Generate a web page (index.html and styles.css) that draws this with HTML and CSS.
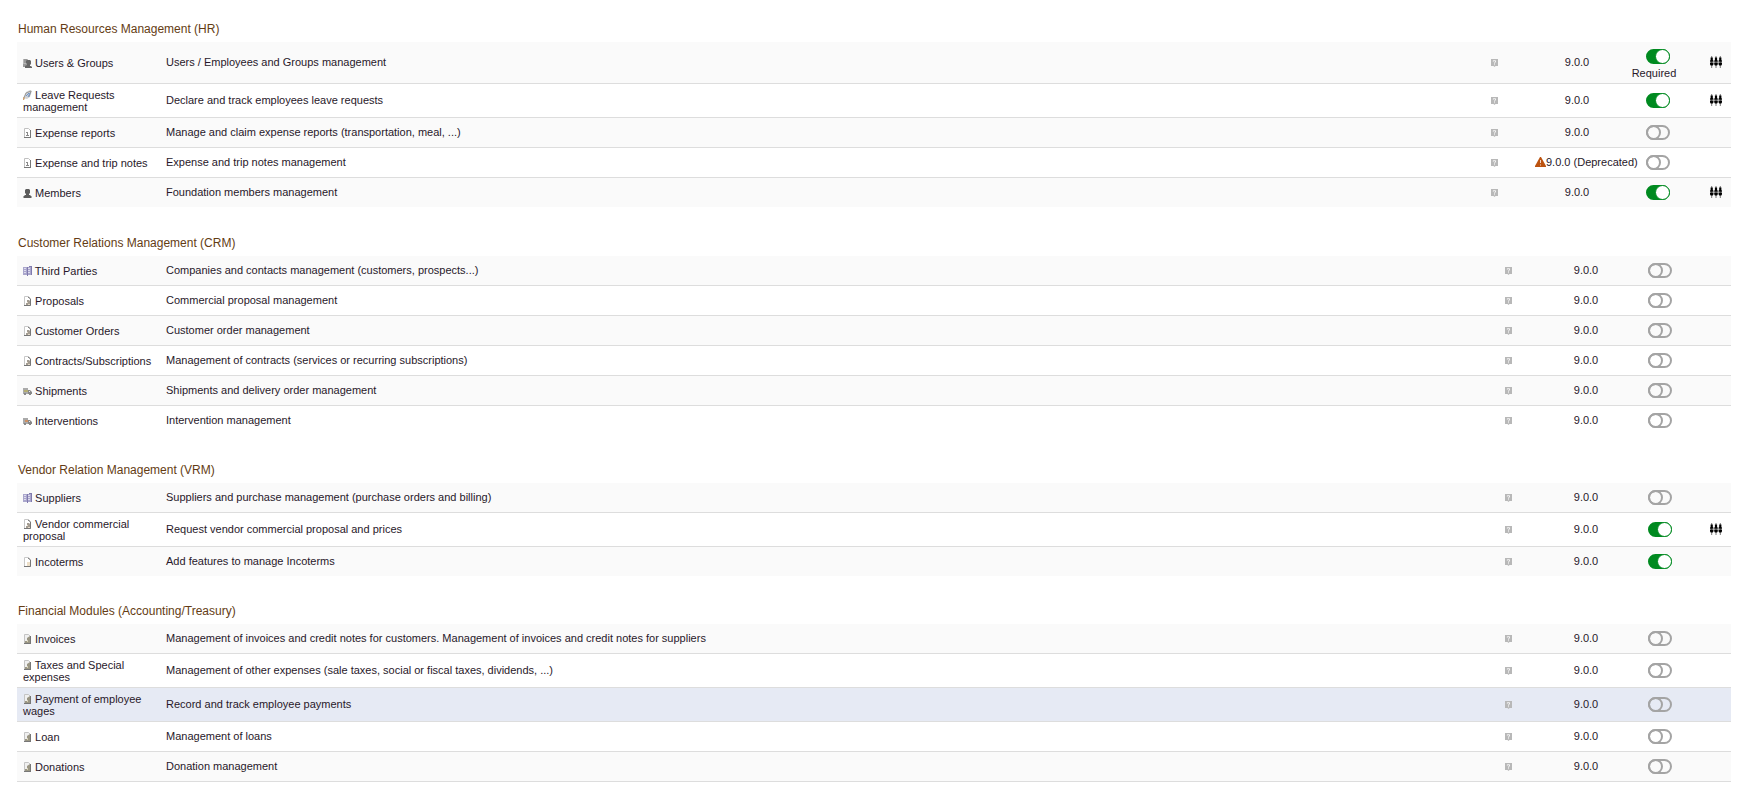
FILE: index.html
```html
<!DOCTYPE html>
<html lang="en">
<head>
  <meta charset="UTF-8">
  <meta name="viewport" content="width=device-width, initial-scale=1.0">
  <title>Modules</title>
  <link rel="stylesheet" href="styles.css">
</head>
<body>
  <!-- Icons shared by the rows -->
  <svg class="sprite" aria-hidden="true">
    <symbol id="icon-users" viewBox="0 0 9 10">
      <path fill="#b8b8b8" d="M0 1h5v7H0z"/>
      <path fill="#999" d="M1 1h3v4H1zM0 6h4v3H0z"/>
      <path fill="#666" d="M4 2h3l1 1v3L7 7v1h1l1 1v1H2V8l2-1V6L3 5V3z"/>
    </symbol>
    <symbol id="icon-user" viewBox="0 0 9 10">
      <path fill="#aaa" d="M0 8h9v2H0z"/>
      <path fill="#5c5c5c" d="M3 1h3l1 1v3L6 6v1h1l1 1v2H1V8l1-1h1V6L2 5V2z"/>
    </symbol>
    <symbol id="icon-leave" viewBox="0 0 9 10">
      <path fill="#d4d4d4" d="M3 2l4-2 2 1-2 6-3 2-4-1z"/>
      <path fill="none" stroke="#999" d="M1 8l2-5 5-2-2 6"/>
      <path fill="none" stroke="#6d94cc" d="M3 6l3-3M5 7l2-4"/>
      <path fill="#cda273" d="M0 7l2 1-1 2H0z"/>
    </symbol>
    <symbol id="icon-report" viewBox="0 0 9 10">
      <path fill="#fff" stroke="#c0c0c0" d="M1.500.5h4l2 2v7h-6z"/>
      <path stroke="#777" d="M7.500 2v8M1 9.500h7"/>
      <path stroke="#888" d="M3 4.500h2M3 7.500h3M4.500 4v4"/>
    </symbol>
    <symbol id="icon-doc" viewBox="0 0 9 10">
      <path fill="#fff" stroke="#c8c8c8" d="M1.500.5h4l2 2v7h-6z"/>
      <path fill="none" stroke="#777" d="M5 1l2.500 2v6.500H1"/>
      <path fill="#eddfc8" d="M4 5h3v4H4z"/>
    </symbol>
    <symbol id="icon-order" viewBox="0 0 9 10">
      <path fill="#fff" stroke="#c8c8c8" d="M1.500.5h4l2 2v7h-6z"/>
      <path fill="none" stroke="#777" d="M5 1l2.500 2v6.500H1"/>
      <path fill="#a39c92" d="M4 4h2l1 1v4H3V7h1z"/>
      <path fill="#e6dac8" d="M4 6h1v1H4zM5 8h2v1H5z"/>
    </symbol>
    <symbol id="icon-bill" viewBox="0 0 9 10">
      <path fill="#f0f0f0" stroke="#c4c4c4" d="M1.500.5h4l2 2v7h-6z"/>
      <path stroke="#777" d="M7.500 2v8M1 9.500h7"/>
      <path fill="#9a9684" d="M4 4l3-2v7H2V7h2z"/>
      <path fill="#d6d0b6" d="M4 6h1v2H4z"/>
    </symbol>
    <symbol id="icon-company" viewBox="0 0 9 10">
      <path fill="#aaa6cc" d="M0 1h4v8H0zM4 1h5v8H4z"/>
      <path fill="#807aad" d="M4 1h1v9H4zM6 0h3v1H6zM8 1h1v8H8z"/>
      <path stroke="#dddbed" d="M1 2.500h2M1 4.500h2M1 6.500h2M5 2.500h2M5 4.500h2M5 6.500h2"/>
    </symbol>
    <symbol id="icon-truck" viewBox="0 0 9 10">
      <path fill="#aaa" d="M0 2h5v6H0z"/>
      <path fill="#b3ad72" d="M1 4h4v2H1z"/>
      <path fill="#888" d="M5 4h2l2 2v2H5zM1 7h2v2H1zM6 7h2v2H6z"/>
      <path fill="#eee" d="M6 5h1v1H6z"/>
    </symbol>
    <symbol id="icon-service" viewBox="0 0 9 10">
      <path fill="#aaa" d="M0 2h5v6H0z"/>
      <path fill="#cc9064" d="M2 4h3v2H2z"/>
      <path fill="#888" d="M5 4h2l2 2v2H5zM1 7h2v2H1zM6 7h2v2H6z"/>
      <path fill="#eee" d="M6 5h1v1H6z"/>
    </symbol>
    <symbol id="icon-help" viewBox="0 0 7 8">
      <path fill="#b8b8b8" d="M0 0h7v7H4.500l-1 1-1-1H0z"/>
      <path fill="none" stroke="#fff" stroke-width=".8" d="M2.300 2.600v-.9h2.200v1.500l-1 .5v1M3.500 5.300v.9"/>
    </symbol>
    <symbol id="icon-setup" viewBox="0 0 12 12">
      <path stroke="#777" d="M1.700 0v12M6 0v12M10.300 0v12"/>
      <path fill="#000" d="M.6 1.500h2.200V4l.7.700v1H0v-1L.6 4zM4.900 1.500h2.200V4l.7.700v1H4.200v-1l.7-.7zM9.200 1.500h2.200V4l.6.700v1H8.500v-1l.7-.7z"/>
      <path fill="#000" d="M0 6.600h3.500v1.600l-.7 1.300H.6L0 8.200zM4.200 6.600h3.600v1.600l-.7 1.300H4.900l-.7-1.300zM8.500 6.600H12v1.600l-.6 1.300H9.200l-.7-1.300z"/>
    </symbol>
    <symbol id="icon-warning" viewBox="0 0 11 10">
      <path fill="#bc5310" d="M5 0h1l5 9v1H0V9z"/>
      <path stroke="#f0d8c8" d="M5.500 3v3M5.500 7.500v1"/>
    </symbol>
  </svg>

  <main class="modules">
    <section class="family">
      <h2>Human Resources Management (HR)</h2>
      <table class="module-table with-notes">
        <colgroup><col class="col-name"><col><col class="col-help"><col class="col-version"><col class="col-status"><col class="col-setup"></colgroup>
        <tbody>
          <tr>
            <td class="name"><label for="mod-users"><svg class="icon"><use href="#icon-users"/></svg> Users &amp; Groups</label></td>
            <td>Users / Employees and Groups management</td>
            <td class="help"><a href="#"><svg><use href="#icon-help"/></svg></a></td>
            <td class="version">9.0.0</td>
            <td class="status"><input type="checkbox" class="toggle" id="mod-users" checked>Required</td>
            <td class="setup"><a href="#"><svg><use href="#icon-setup"/></svg></a></td>
          </tr>
          <tr>
            <td class="name"><label for="mod-leave"><svg class="icon"><use href="#icon-leave"/></svg> Leave Requests management</label></td>
            <td>Declare and track employees leave requests</td>
            <td class="help"><a href="#"><svg><use href="#icon-help"/></svg></a></td>
            <td class="version">9.0.0</td>
            <td class="status"><input type="checkbox" class="toggle" id="mod-leave" checked></td>
            <td class="setup"><a href="#"><svg><use href="#icon-setup"/></svg></a></td>
          </tr>
          <tr>
            <td class="name"><label for="mod-expense"><svg class="icon"><use href="#icon-report"/></svg> Expense reports</label></td>
            <td>Manage and claim expense reports (transportation, meal, ...)</td>
            <td class="help"><a href="#"><svg><use href="#icon-help"/></svg></a></td>
            <td class="version">9.0.0</td>
            <td class="status"><input type="checkbox" class="toggle" id="mod-expense"></td>
            <td class="setup"></td>
          </tr>
          <tr>
            <td class="name"><label for="mod-trip"><svg class="icon"><use href="#icon-report"/></svg> Expense and trip notes</label></td>
            <td>Expense and trip notes management</td>
            <td class="help"><a href="#"><svg><use href="#icon-help"/></svg></a></td>
            <td class="version"><svg class="warning"><use href="#icon-warning"/></svg>9.0.0 (Deprecated)</td>
            <td class="status"><input type="checkbox" class="toggle" id="mod-trip"></td>
            <td class="setup"></td>
          </tr>
          <tr>
            <td class="name"><label for="mod-members"><svg class="icon"><use href="#icon-user"/></svg> Members</label></td>
            <td>Foundation members management</td>
            <td class="help"><a href="#"><svg><use href="#icon-help"/></svg></a></td>
            <td class="version">9.0.0</td>
            <td class="status"><input type="checkbox" class="toggle" id="mod-members" checked></td>
            <td class="setup"><a href="#"><svg><use href="#icon-setup"/></svg></a></td>
          </tr>
        </tbody>
      </table>
    </section>

    <section class="family">
      <h2>Customer Relations Management (CRM)</h2>
      <table class="module-table">
        <colgroup><col class="col-name"><col><col class="col-help"><col class="col-version"><col class="col-status"><col class="col-setup"></colgroup>
        <tbody>
          <tr>
            <td class="name"><label for="mod-third"><svg class="icon"><use href="#icon-company"/></svg> Third Parties</label></td>
            <td>Companies and contacts management (customers, prospects...)</td>
            <td class="help"><a href="#"><svg><use href="#icon-help"/></svg></a></td>
            <td class="version">9.0.0</td>
            <td class="status"><input type="checkbox" class="toggle" id="mod-third"></td>
            <td class="setup"></td>
          </tr>
          <tr>
            <td class="name"><label for="mod-proposals"><svg class="icon"><use href="#icon-order"/></svg> Proposals</label></td>
            <td>Commercial proposal management</td>
            <td class="help"><a href="#"><svg><use href="#icon-help"/></svg></a></td>
            <td class="version">9.0.0</td>
            <td class="status"><input type="checkbox" class="toggle" id="mod-proposals"></td>
            <td class="setup"></td>
          </tr>
          <tr>
            <td class="name"><label for="mod-orders"><svg class="icon"><use href="#icon-order"/></svg> Customer Orders</label></td>
            <td>Customer order management</td>
            <td class="help"><a href="#"><svg><use href="#icon-help"/></svg></a></td>
            <td class="version">9.0.0</td>
            <td class="status"><input type="checkbox" class="toggle" id="mod-orders"></td>
            <td class="setup"></td>
          </tr>
          <tr>
            <td class="name"><label for="mod-contracts"><svg class="icon"><use href="#icon-order"/></svg> Contracts/Subscriptions</label></td>
            <td>Management of contracts (services or recurring subscriptions)</td>
            <td class="help"><a href="#"><svg><use href="#icon-help"/></svg></a></td>
            <td class="version">9.0.0</td>
            <td class="status"><input type="checkbox" class="toggle" id="mod-contracts"></td>
            <td class="setup"></td>
          </tr>
          <tr>
            <td class="name"><label for="mod-shipments"><svg class="icon"><use href="#icon-truck"/></svg> Shipments</label></td>
            <td>Shipments and delivery order management</td>
            <td class="help"><a href="#"><svg><use href="#icon-help"/></svg></a></td>
            <td class="version">9.0.0</td>
            <td class="status"><input type="checkbox" class="toggle" id="mod-shipments"></td>
            <td class="setup"></td>
          </tr>
          <tr>
            <td class="name"><label for="mod-interventions"><svg class="icon"><use href="#icon-service"/></svg> Interventions</label></td>
            <td>Intervention management</td>
            <td class="help"><a href="#"><svg><use href="#icon-help"/></svg></a></td>
            <td class="version">9.0.0</td>
            <td class="status"><input type="checkbox" class="toggle" id="mod-interventions"></td>
            <td class="setup"></td>
          </tr>
        </tbody>
      </table>
    </section>

    <section class="family">
      <h2>Vendor Relation Management (VRM)</h2>
      <table class="module-table">
        <colgroup><col class="col-name"><col><col class="col-help"><col class="col-version"><col class="col-status"><col class="col-setup"></colgroup>
        <tbody>
          <tr>
            <td class="name"><label for="mod-suppliers"><svg class="icon"><use href="#icon-company"/></svg> Suppliers</label></td>
            <td>Suppliers and purchase management (purchase orders and billing)</td>
            <td class="help"><a href="#"><svg><use href="#icon-help"/></svg></a></td>
            <td class="version">9.0.0</td>
            <td class="status"><input type="checkbox" class="toggle" id="mod-suppliers"></td>
            <td class="setup"></td>
          </tr>
          <tr>
            <td class="name"><label for="mod-vendor"><svg class="icon"><use href="#icon-order"/></svg> Vendor commercial proposal</label></td>
            <td>Request vendor commercial proposal and prices</td>
            <td class="help"><a href="#"><svg><use href="#icon-help"/></svg></a></td>
            <td class="version">9.0.0</td>
            <td class="status"><input type="checkbox" class="toggle" id="mod-vendor" checked></td>
            <td class="setup"><a href="#"><svg><use href="#icon-setup"/></svg></a></td>
          </tr>
          <tr>
            <td class="name"><label for="mod-incoterms"><svg class="icon"><use href="#icon-doc"/></svg> Incoterms</label></td>
            <td>Add features to manage Incoterms</td>
            <td class="help"><a href="#"><svg><use href="#icon-help"/></svg></a></td>
            <td class="version">9.0.0</td>
            <td class="status"><input type="checkbox" class="toggle" id="mod-incoterms" checked></td>
            <td class="setup"></td>
          </tr>
        </tbody>
      </table>
    </section>

    <section class="family">
      <h2>Financial Modules (Accounting/Treasury)</h2>
      <table class="module-table closed">
        <colgroup><col class="col-name"><col><col class="col-help"><col class="col-version"><col class="col-status"><col class="col-setup"></colgroup>
        <tbody>
          <tr>
            <td class="name"><label for="mod-invoices"><svg class="icon"><use href="#icon-bill"/></svg> Invoices</label></td>
            <td>Management of invoices and credit notes for customers. Management of invoices and credit notes for suppliers</td>
            <td class="help"><a href="#"><svg><use href="#icon-help"/></svg></a></td>
            <td class="version">9.0.0</td>
            <td class="status"><input type="checkbox" class="toggle" id="mod-invoices"></td>
            <td class="setup"></td>
          </tr>
          <tr>
            <td class="name"><label for="mod-taxes"><svg class="icon"><use href="#icon-bill"/></svg> Taxes and Special expenses</label></td>
            <td>Management of other expenses (sale taxes, social or fiscal taxes, dividends, ...)</td>
            <td class="help"><a href="#"><svg><use href="#icon-help"/></svg></a></td>
            <td class="version">9.0.0</td>
            <td class="status"><input type="checkbox" class="toggle" id="mod-taxes"></td>
            <td class="setup"></td>
          </tr>
          <tr class="active">
            <td class="name"><label for="mod-wages"><svg class="icon"><use href="#icon-bill"/></svg> Payment of employee wages</label></td>
            <td>Record and track employee payments</td>
            <td class="help"><a href="#"><svg><use href="#icon-help"/></svg></a></td>
            <td class="version">9.0.0</td>
            <td class="status"><input type="checkbox" class="toggle" id="mod-wages"></td>
            <td class="setup"></td>
          </tr>
          <tr>
            <td class="name"><label for="mod-loan"><svg class="icon"><use href="#icon-bill"/></svg> Loan</label></td>
            <td>Management of loans</td>
            <td class="help"><a href="#"><svg><use href="#icon-help"/></svg></a></td>
            <td class="version">9.0.0</td>
            <td class="status"><input type="checkbox" class="toggle" id="mod-loan"></td>
            <td class="setup"></td>
          </tr>
          <tr>
            <td class="name"><label for="mod-donations"><svg class="icon"><use href="#icon-bill"/></svg> Donations</label></td>
            <td>Donation management</td>
            <td class="help"><a href="#"><svg><use href="#icon-help"/></svg></a></td>
            <td class="version">9.0.0</td>
            <td class="status"><input type="checkbox" class="toggle" id="mod-donations"></td>
            <td class="setup"></td>
          </tr>
        </tbody>
      </table>
    </section>
  </main>
</body>
</html>
```
FILE: styles.css
```css
body {
  margin: 0;
  background: #fff;
  color: #28182a;
  font-family: "Liberation Sans", Arial, sans-serif;
  font-size: 11px;
  line-height: 12px;
}
.sprite {
  display: none;
}
.modules {
  padding: 0 17px;
}
.family {
  padding-top: 21px;
}
.family + .family {
  padding-top: 27px;
}
.family h2 {
  margin: 0;
  padding: 0 1px 5px;
  color: #643c14;
  font-size: 12px;
  font-weight: normal;
  line-height: 16px;
}
.module-table {
  width: 100%;
  table-layout: fixed;
  border-collapse: separate;
  border-spacing: 0;
}
.with-notes {
  margin-bottom: 1px;
}
.col-name { width: 143px; }
.col-help { width: 69px; }
.col-version { width: 86px; }
.col-status { width: 54px; }
.col-setup { width: 48px; }
.with-notes .col-help { width: 70px; }
.with-notes .col-version { width: 96px; }
.with-notes .col-status { width: 58px; }
td {
  height: 20px;
  padding: 4px 6px 5px;
  border-bottom: 1px solid #ddd;
  vertical-align: middle;
}
tr:last-child td {
  border-bottom: none;
}
.closed tr:last-child td {
  border-bottom: 1px solid #ddd;
}
tr:nth-child(odd) {
  background: #fafafa;
}
tr.active {
  background: #e6eaf4;
}
.name, .help, .status {
  padding-top: 5px;
  padding-bottom: 4px;
}
.icon {
  width: 9px;
  height: 10px;
  vertical-align: -1px;
}
.help, .version {
  text-align: center;
}
.version {
  white-space: nowrap;
}
.help svg {
  display: block;
  width: 7px;
  height: 8px;
  margin: 0 auto;
}
.warning {
  width: 11px;
  height: 10px;
  vertical-align: -1px;
}
.status {
  padding-left: 0;
  padding-right: 0;
  text-align: center;
}
.toggle {
  appearance: none;
  display: block;
  box-sizing: border-box;
  width: 24px;
  height: 15px;
  margin: 2px 0 3px calc(50% - 8px);
  border: 2px solid #a4a4a4;
  border-radius: 8px;
  cursor: pointer;
}
.toggle::before {
  content: "";
  display: block;
  box-sizing: border-box;
  width: 15px;
  height: 15px;
  margin: -2px;
  border: 2px solid #a4a4a4;
  border-radius: 50%;
}
.toggle:checked {
  border-color: #008a20;
  background: #008a20;
}
.toggle:checked::before {
  margin-left: 7px;
  border-width: 1px;
  border-color: #008a20;
  background: #fff;
}
.setup {
  padding-right: 9px;
}
.setup svg {
  display: block;
  width: 12px;
  height: 12px;
  margin-left: auto;
}
```
